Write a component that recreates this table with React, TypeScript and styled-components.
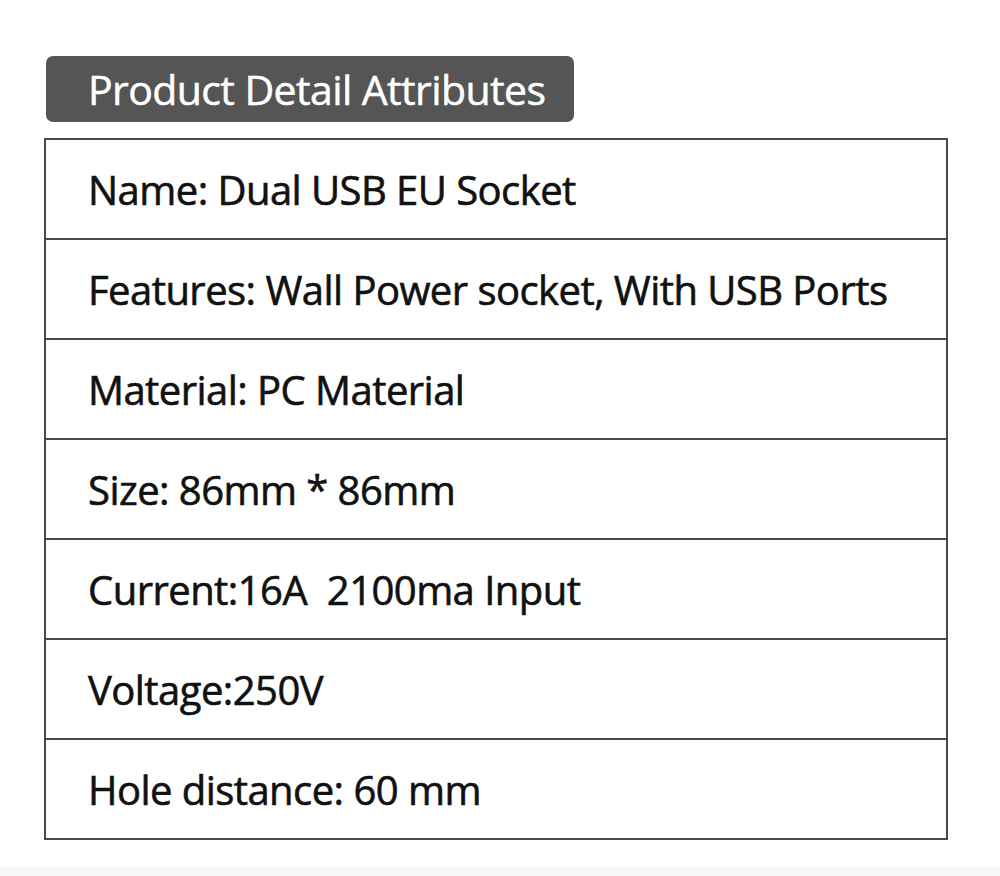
import React from "react";
import styled, { createGlobalStyle } from "styled-components";

const GlobalStyle = createGlobalStyle`
  html, body { margin: 0; padding: 0; background: #ffffff; }
  body { font-family: "Open Sans", "Noto Sans", sans-serif; }
`;

const Page = styled.div`
  width: 1000px;
  height: 876px;
  display: flex;
  flex-direction: column;
  background: #ffffff;
  overflow: hidden;
`;

const Content = styled.div`
  flex: 1;
  display: flex;
  flex-direction: column;
  padding: 56px 0 0 44px;
`;

const Badge = styled.div`
  margin-left: 2px;
  width: 528px;
  height: 66px;
  box-sizing: border-box;
  padding-left: 42px;
  display: flex;
  align-items: center;
  background: #555555;
  border-radius: 7px;
  color: #ffffff;
  font-size: 41px;
  letter-spacing: -0.6px;
  font-weight: 400;
  -webkit-text-stroke: 0.5px #ffffff;
`;

const Table = styled.div`
  margin-top: 16px;
  width: 904px;
  box-sizing: border-box;
  border: 2px solid #4a4a4a;
  display: flex;
  flex-direction: column;
`;

const Row = styled.div<{ $last?: boolean }>`
  height: ${(p) => (p.$last ? "98px" : "100px")};
  box-sizing: border-box;
  display: flex;
  align-items: center;
  padding-left: 42px;
  border-bottom: ${(p) => (p.$last ? "none" : "2px solid #4a4a4a")};
  color: #111111;
  font-size: 40px;
  font-weight: 400;
  letter-spacing: -0.55px;
  -webkit-text-stroke: 0.6px #111111;
  white-space: pre;
`;

const Footer = styled.div`
  height: 9px;
  background: #f7f7f7;
`;

const rows = [
  "Name: Dual USB EU Socket",
  "Features: Wall Power socket, With USB Ports",
  "Material: PC Material",
  "Size: 86mm * 86mm",
  "Current:16A  2100ma Input",
  "Voltage:250V",
  "Hole distance: 60 mm",
];

export default function App() {
  return (
    <>
      <GlobalStyle />
      <Page>
        <Content>
          <Badge>Product Detail Attributes</Badge>
          <Table>
            {rows.map((r, i) => (
              <Row key={i} $last={i === rows.length - 1}>
                {r}
              </Row>
            ))}
          </Table>
        </Content>
        <Footer />
      </Page>
    </>
  );
}
